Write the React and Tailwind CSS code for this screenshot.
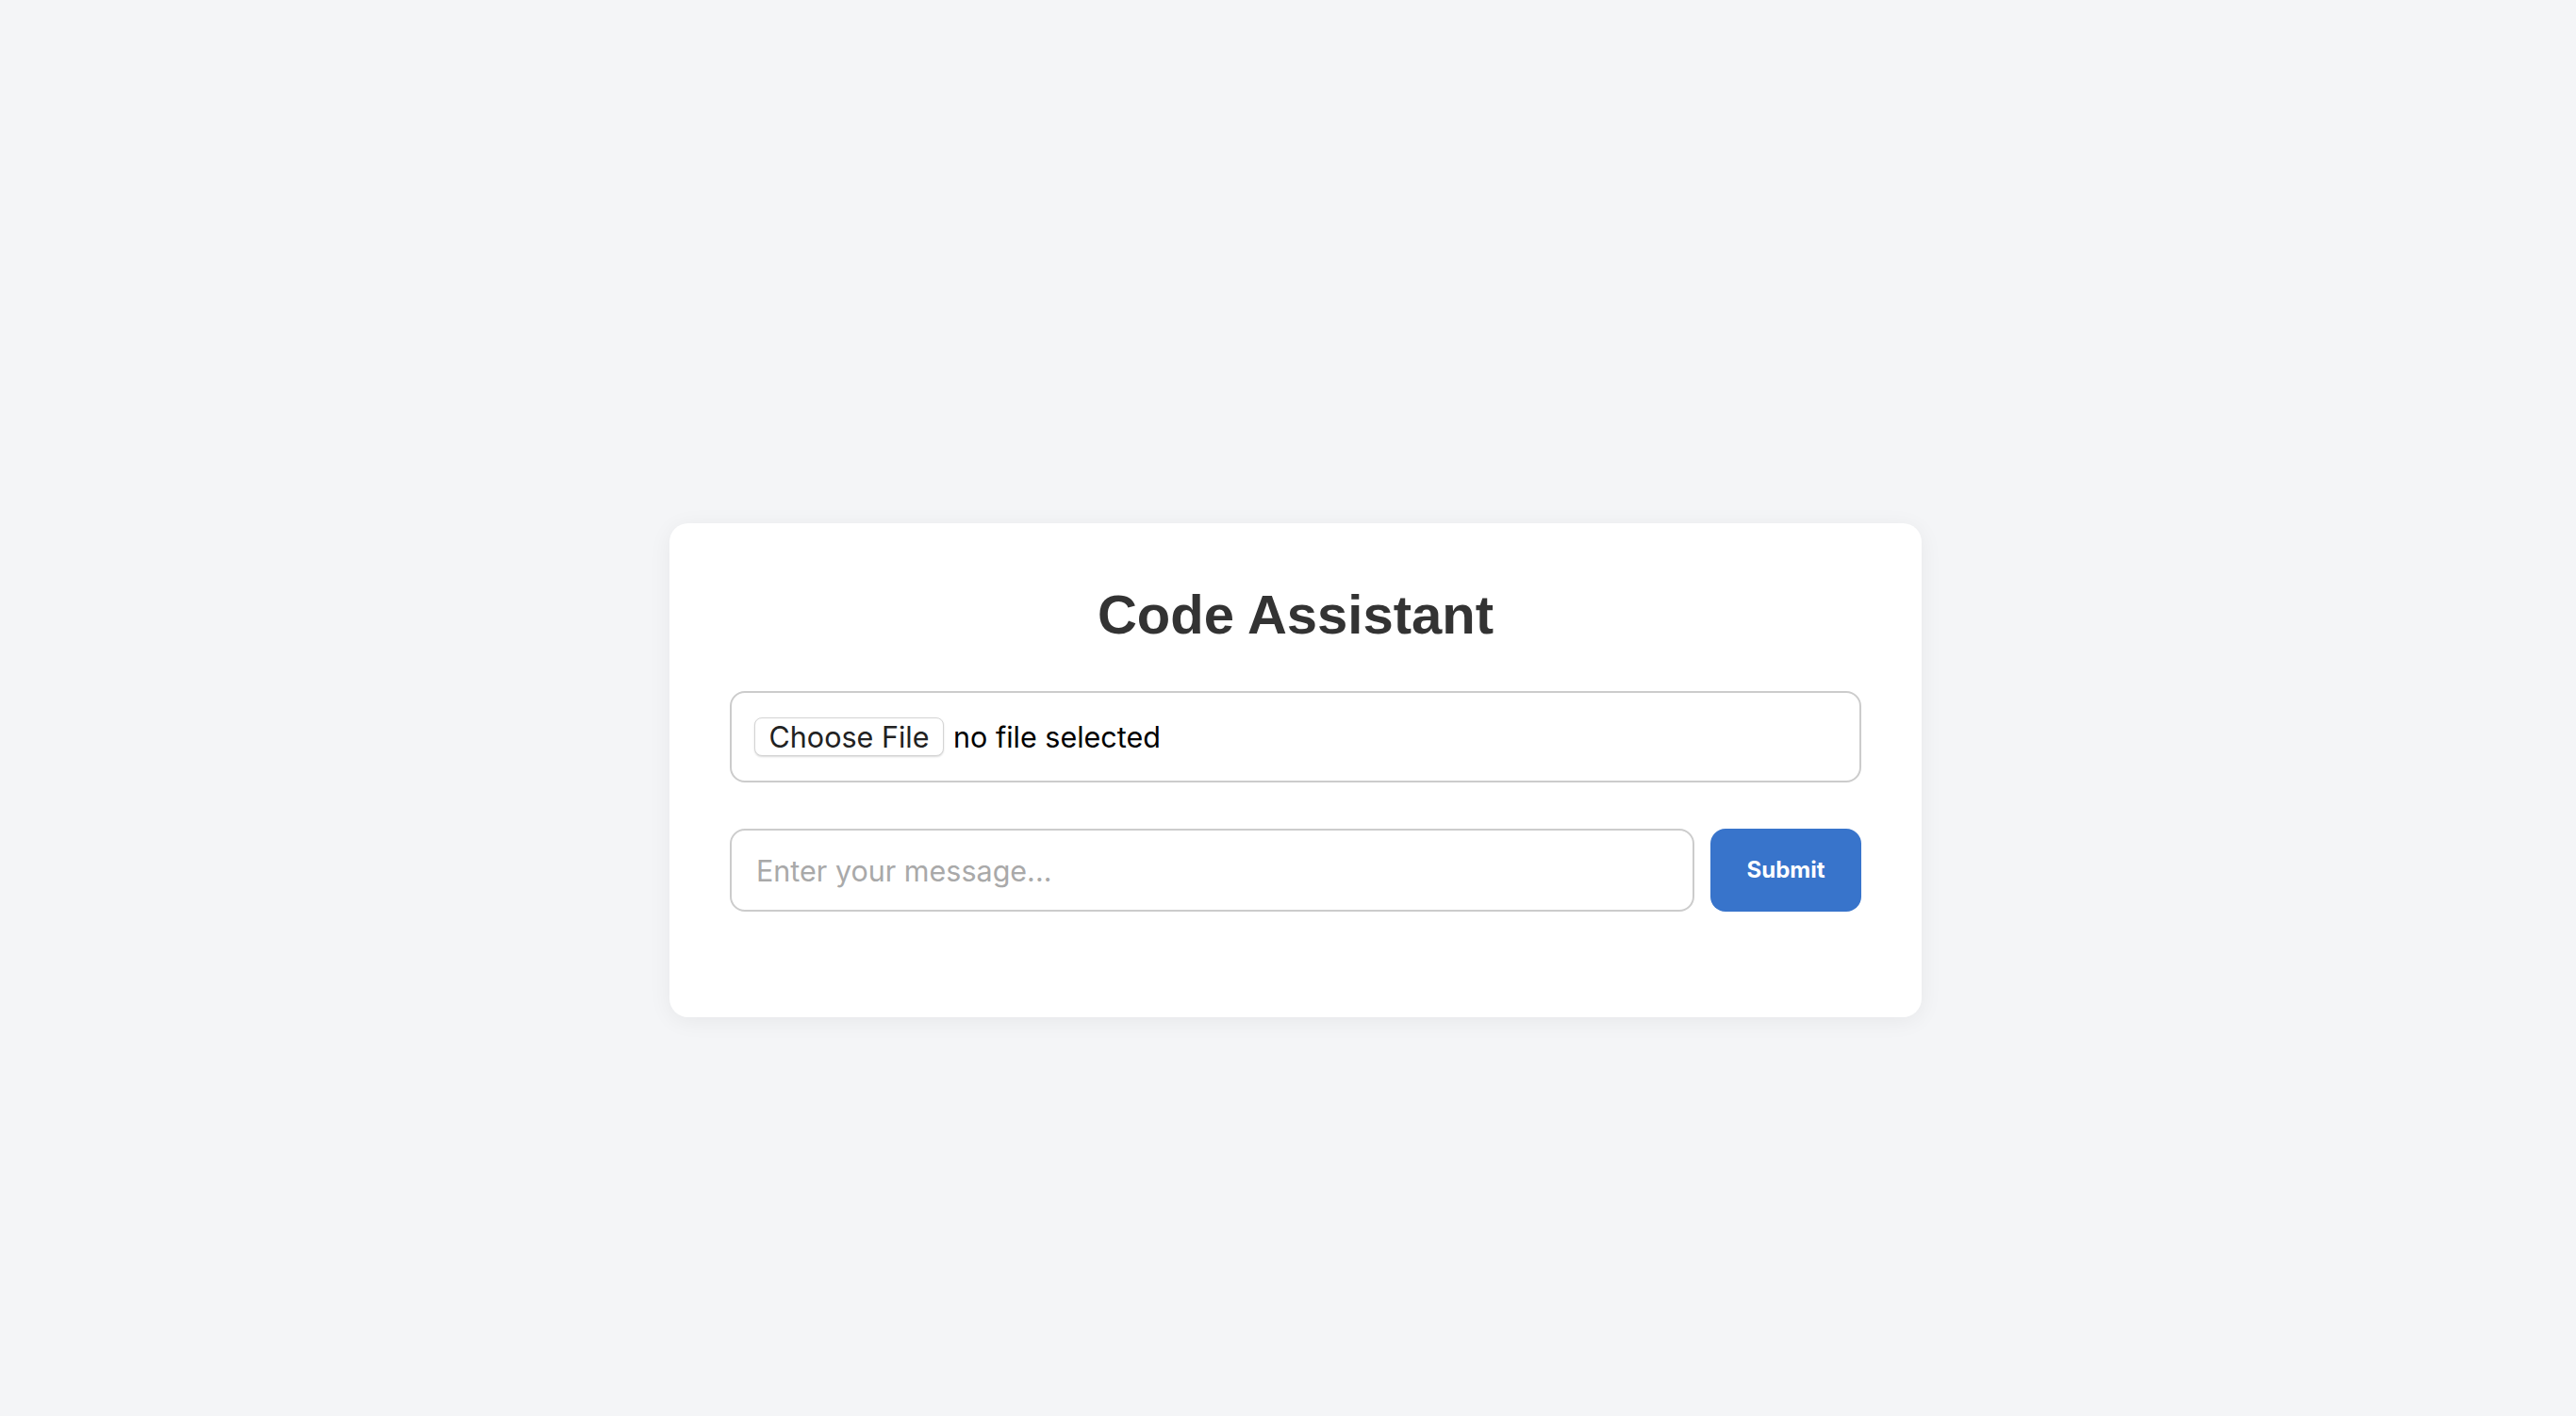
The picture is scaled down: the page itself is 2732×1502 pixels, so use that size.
export default function App() {
  return (
    <div className="min-h-screen bg-[#f4f5f7] flex justify-center items-start pt-[555px] font-['Inter',sans-serif]">
      <div className="ml-[16px] w-[1328px] bg-white rounded-[20px] shadow-[0_4px_24px_rgba(0,0,0,0.06)] px-[64px] pt-[64px] pb-[112px]">
        {/* Title */}
        <h1 className="text-center font-['Liberation_Sans',Arial,sans-serif] font-bold text-[58px] leading-[65px] text-[#333333] mb-[49px]">
          Code Assistant
        </h1>

        {/* File picker */}
        <div className="h-[97px] border-2 border-[#cccccc] rounded-[16px] flex items-center pl-[24px] mb-[49px]">
          <label className="h-[41px] w-[201px] flex items-center justify-center bg-white border border-[#d4d4d4] rounded-[8px] shadow-[0_1px_2px_rgba(0,0,0,0.15)] text-[30.5px] text-[#222222] cursor-pointer">
            Choose File
            <input type="file" className="hidden" />
          </label>
          <span className="ml-[10px] text-[30.5px] text-black">no file selected</span>
        </div>

        {/* Message row */}
        <form className="flex gap-[17px]" onSubmit={(e) => e.preventDefault()}>
          <input
            type="text"
            placeholder="Enter your message..."
            className="flex-1 h-[88px] border-2 border-[#cccccc] rounded-[16px] px-[26px] text-[30.5px] text-[#222222] placeholder:text-[#a9a9a9] outline-none"
          />
          <button
            type="submit"
            className="w-[160px] h-[88px] bg-[#3874cb] rounded-[16px] text-white font-bold text-[24px]"
          >
            Submit
          </button>
        </form>
      </div>
    </div>
  );
}
